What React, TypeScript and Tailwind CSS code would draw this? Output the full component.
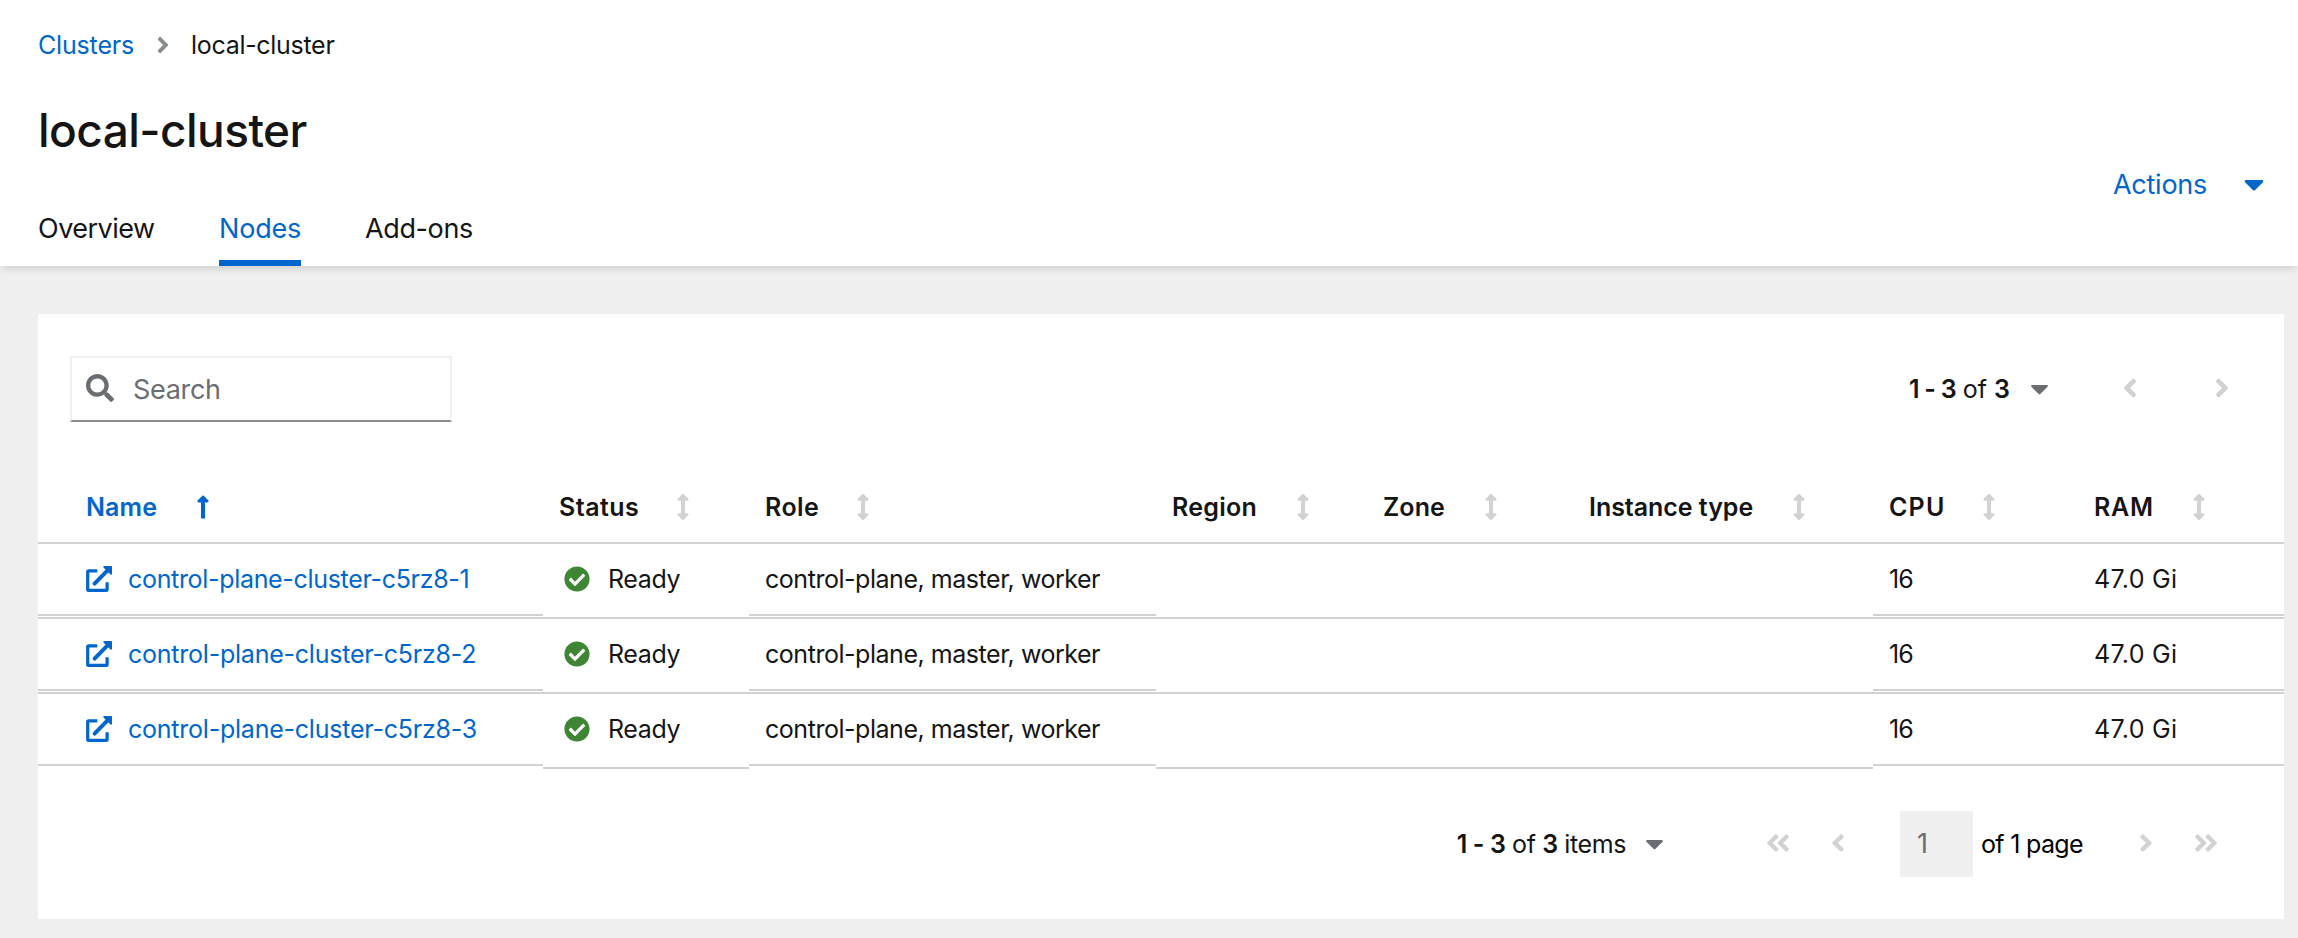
import type { ReactNode } from "react";
import {
  FaAngleDoubleLeft,
  FaAngleDoubleRight,
  FaAngleLeft,
  FaAngleRight,
  FaArrowsAltV,
  FaCaretDown,
  FaCheckCircle,
  FaLongArrowAltUp,
  FaSearch,
} from "react-icons/fa";

const GRID = "grid grid-cols-[505px_206px_407px_211px_206px_300px_205px_206px]";

const COLUMNS = [
  { label: "Name", text: "tracking-[0.1px]", pad: "pl-[48px] gap-[33px]" },
  { label: "Status", text: "tracking-[0.46px]", pad: "pl-[16px] gap-[31px]" },
  { label: "Role", text: "tracking-[0.41px]", pad: "pl-[16px] gap-[31px]" },
  { label: "Region", text: "tracking-[0.28px]", pad: "pl-[16px] gap-[33px]" },
  { label: "Zone", text: "tracking-[0.06px]", pad: "pl-[16px] gap-[33px]" },
  { label: "Instance type", text: "tracking-[-0.04px]", pad: "pl-[16px] gap-[33px]" },
  { label: "CPU", text: "tracking-[1.2px]", pad: "pl-[16px] gap-[30px]" },
  { label: "RAM", text: "tracking-[0.7px]", pad: "pl-[16px] gap-[32px]" },
];

const NODES = [
  { name: "control-plane-cluster-c5rz8-1", role: "control-plane, master, worker", cpu: "16", ram: "47.0 Gi" },
  { name: "control-plane-cluster-c5rz8-2", role: "control-plane, master, worker", cpu: "16", ram: "47.0 Gi" },
  { name: "control-plane-cluster-c5rz8-3", role: "control-plane, master, worker", cpu: "16", ram: "47.0 Gi" },
];

function ExternalLinkIcon() {
  return (
    <svg viewBox="0 0 26 26" className="size-[26px] shrink-0" fill="none">
      <path
        d="M11.3 4.9H2.6a.9.9 0 0 0-.9.9v17.6a.9.9 0 0 0 .9.9h17.6a.9.9 0 0 0 .9-.9v-7.2"
        stroke="currentColor"
        strokeWidth="3.2"
        strokeLinejoin="round"
      />
      <path d="M8.6 17.6 21.8 4.2" stroke="currentColor" strokeWidth="4" strokeLinecap="round" />
      <path d="M18.2 0H25.2a.8.8 0 0 1 .8.8V7.8c0 .9-.9 1.2-1.5.7L17.5 1.5C16.9.9 17.3 0 18.2 0Z" fill="currentColor" />
    </svg>
  );
}

function Cell({ children, className = "" }: { children?: ReactNode; className?: string }) {
  return (
    <div className={`flex h-[72px] items-center border-b-2 border-[#d2d2d2] whitespace-nowrap ${className}`}>
      {children}
    </div>
  );
}

function Header() {
  return (
    <header className="relative flex h-[266px] shrink-0 justify-between bg-white pl-[38px] pr-[28px] shadow-[0_4px_8px_-2px_rgba(3,3,3,0.16)]">
      <div className="flex flex-col pt-[30px]">
        <nav className="flex h-[30px] items-center text-[25px]">
          <a className="w-[112px] pt-[2px] tracking-[-0.17px] text-[#0066cc]">Clusters</a>
          <FaAngleRight className="size-[26px] text-[#8a8d90]" />
          <span className="ml-[15px] pt-[2px] tracking-[-0.3px]">local-cluster</span>
        </nav>
        <h1 className="mt-[43px] h-[54px] text-[46px] leading-[54px] font-medium tracking-[-0.55px]">local-cluster</h1>
        <div className="mt-[33px] flex h-[76px] gap-[64px] text-[27px] leading-[78px]">
          <a className="w-[117px] tracking-[-0.5px]">Overview</a>
          <a className="h-[76px] w-[82px] border-b-[6px] border-[#0066cc] tracking-[-0.2px] text-[#0066cc]">Nodes</a>
          <a className="tracking-[-0.38px]">Add-ons</a>
        </div>
      </div>
      <button className="mt-[152px] flex h-[64px] items-center gap-[31px] text-[27px] tracking-[-0.26px] text-[#0066cc]">
        <span className="pt-[2px]">Actions</span>
        <FaCaretDown className="size-[32px]" />
      </button>
    </header>
  );
}

function Toolbar() {
  return (
    <div className="flex h-[66px] items-center justify-between pl-[32px] pr-[47px]">
      <div className="flex h-[66px] w-[382px] items-center border-2 border-[#f0f0f0] border-b-[#8a8d90] pl-[14px] text-[#6a6e73]">
        <FaSearch className="mb-[2px] size-[28px]" />
        <span className="ml-[19px] pt-[2px] text-[27px] tracking-[-0.33px]">Search</span>
      </div>
      <div className="flex items-center">
        <span className="pt-px text-[25px] whitespace-pre">
          <b className="font-semibold tracking-[-0.8px]">1 - 3</b> of <b className="font-semibold">3</b>
        </span>
        <FaCaretDown className="mb-px ml-[15px] size-[29px] text-[#6a6e73]" />
        <FaAngleLeft className="mb-[2px] ml-[61px] size-[30px] text-[#d2d2d2]" />
        <FaAngleRight className="mb-[2px] ml-[62px] size-[30px] text-[#d2d2d2]" />
      </div>
    </div>
  );
}

function NodesTable() {
  return (
    <div className="mt-[50px]">
      <div className={`${GRID} h-[72px] border-b-2 border-[#d2d2d2] text-[25px] font-semibold`}>
        {COLUMNS.map((c, i) => (
          <div key={c.label} className={`flex items-center whitespace-nowrap ${c.pad} ${i === 0 ? "text-[#0066cc]" : ""}`}>
            <span className={`pt-[2px] ${c.text}`}>{c.label}</span>
            {i === 0 ? <FaLongArrowAltUp className="size-[26px]" /> : <FaArrowsAltV className="size-[26px] text-[#d2d2d2]" />}
          </div>
        ))}
      </div>
      {NODES.map((n, i) => {
        const last = i === NODES.length - 1;
        const tall = last ? "h-[75px] border-b-2 pb-[3px]" : "h-[73px] pb-[3px]";
        return (
          <div key={n.name} className={`${GRID} h-[75px] text-[25px] ${last ? "" : "border-b-2 border-[#d2d2d2]"}`}>
            <Cell className="pl-[48px] text-[#0066cc]">
              <ExternalLinkIcon />
              <a className={`ml-[16px] pt-px ${i === 0 ? "tracking-[-0.32px]" : "tracking-[-0.23px]"}`}>{n.name}</a>
            </Cell>
            <div className={`flex items-center border-[#d2d2d2] pl-[21px] whitespace-nowrap ${tall}`}>
              <FaCheckCircle className="size-[26px] text-[#3e8635]" />
              <span className="ml-[18px] pt-px tracking-[-0.4px]">Ready</span>
            </div>
            <Cell className="pt-px pl-[16px] tracking-[-0.46px]">{n.role}</Cell>
            <div className={`col-span-3 border-[#d2d2d2] ${tall}`} />
            <Cell className="pt-px pl-[16px] tracking-[-1px]">{n.cpu}</Cell>
            <Cell className="pt-px pl-[16px] tracking-[0.3px]">{n.ram}</Cell>
          </div>
        );
      })}
    </div>
  );
}

function BottomPagination() {
  return (
    <div className="mt-[42px] flex h-[66px] items-center justify-end pr-[64px] text-[25px] whitespace-pre">
      <span className="pt-px tracking-[-0.4px]">
        <b className="font-semibold">1 - 3</b> of <b className="font-semibold">3</b> items
      </span>
      <FaCaretDown className="mb-[2px] ml-[14px] size-[29px] text-[#6a6e73]" />
      <FaAngleDoubleLeft className="mb-[3px] ml-[95px] size-[28px] text-[#d2d2d2]" />
      <FaAngleLeft className="mb-[3px] ml-[32px] size-[28px] text-[#d2d2d2]" />
      <span className="ml-[48px] flex h-[66px] w-[73px] items-center bg-[#f0f0f0] pl-[17px] text-[27px] text-[#6a6e73]">1</span>
      <span className="ml-[8px] w-[103px] pt-px tracking-[-0.67px] text-black">of 1 page</span>
      <FaAngleRight className="mb-[3px] ml-[48px] size-[28px] text-[#d2d2d2]" />
      <FaAngleDoubleRight className="mb-[3px] ml-[32px] size-[28px] text-[#d2d2d2]" />
    </div>
  );
}

export default function App() {
  return (
    <div className="flex h-[938px] w-[2298px] flex-col overflow-hidden bg-[#efefef] font-['Inter',sans-serif] text-[#151515]">
      <Header />
      <main className="mt-[48px] ml-[38px] h-[605px] w-[2246px] bg-white pt-[42px]">
        <Toolbar />
        <NodesTable />
        <BottomPagination />
      </main>
    </div>
  );
}
